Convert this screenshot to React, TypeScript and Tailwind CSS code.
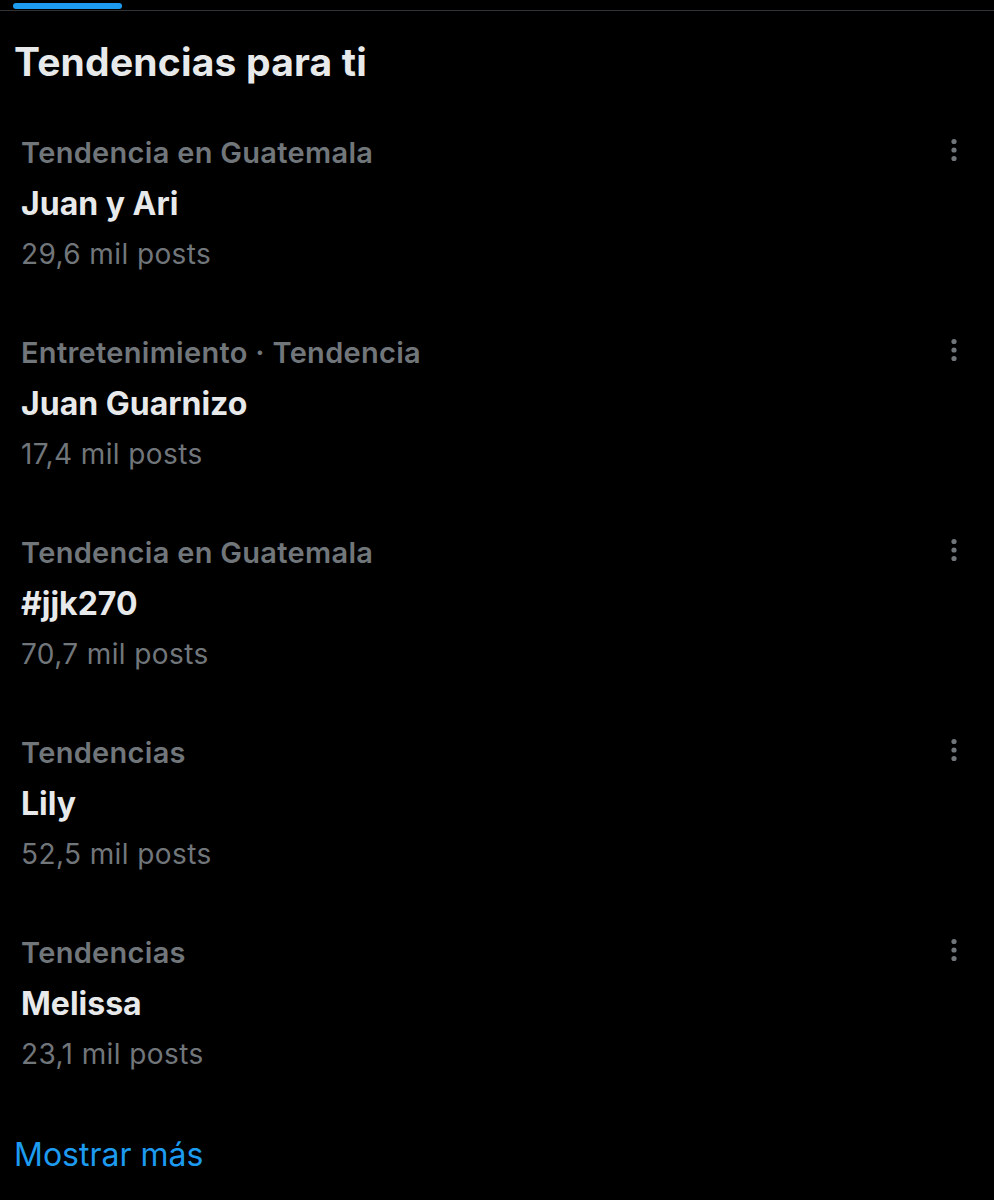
const trends = [
  { category: "Tendencia en Guatemala", name: "Juan y Ari", posts: "29,6 mil posts" },
  { category: "Entretenimiento · Tendencia", name: "Juan Guarnizo", posts: "17,4 mil posts" },
  { category: "Tendencia en Guatemala", name: "#jjk270", posts: "70,7 mil posts" },
  { category: "Tendencias", name: "Lily", posts: "52,5 mil posts" },
  { category: "Tendencias", name: "Melissa", posts: "23,1 mil posts" },
];

function MoreDots() {
  return (
    <svg width="10" height="26" viewBox="0 0 10 26" className="mt-[10px] shrink-0">
      <circle cx="5" cy="4.5" r="2.6" fill="#71767b" />
      <circle cx="5" cy="13" r="2.6" fill="#71767b" />
      <circle cx="5" cy="21.5" r="2.6" fill="#71767b" />
    </svg>
  );
}

export default function App() {
  return (
    <div className="min-h-[1200px] w-[994px] bg-black font-['Inter',sans-serif]">
      {/* Barra de pestañas */}
      <div className="relative h-[11px] border-b border-[#2f3336]">
        <div className="absolute left-[13px] top-[3px] h-[6px] w-[109px] rounded-full bg-[#1d9bf0]" />
      </div>

      <h2 className="mt-[27px] px-[14px] text-[39px] font-bold leading-[48px] tracking-[0.2px] text-[#e7e9ea]">
        Tendencias para ti
      </h2>

      <div className="mt-[41px] flex flex-col gap-[47px]">
        {trends.map((t, i) => (
          <div key={i} className="flex items-start justify-between pl-[21px] pr-[35px]">
            <div className="flex flex-col">
              <span className="text-[29px] font-semibold leading-[51px] tracking-[0.3px] text-[#71767b]">
                {t.category}
              </span>
              <span className="text-[32px] font-bold leading-[51px] text-[#e7e9ea]">{t.name}</span>
              <span className="text-[28px] leading-[51px] tracking-[0.4px] text-[#71767b]">{t.posts}</span>
            </div>
            <MoreDots />
          </div>
        ))}
      </div>

      <div className="mt-[51px] px-[14px] text-[32px] leading-[48px] text-[#1d9bf0]">Mostrar más</div>
    </div>
  );
}
